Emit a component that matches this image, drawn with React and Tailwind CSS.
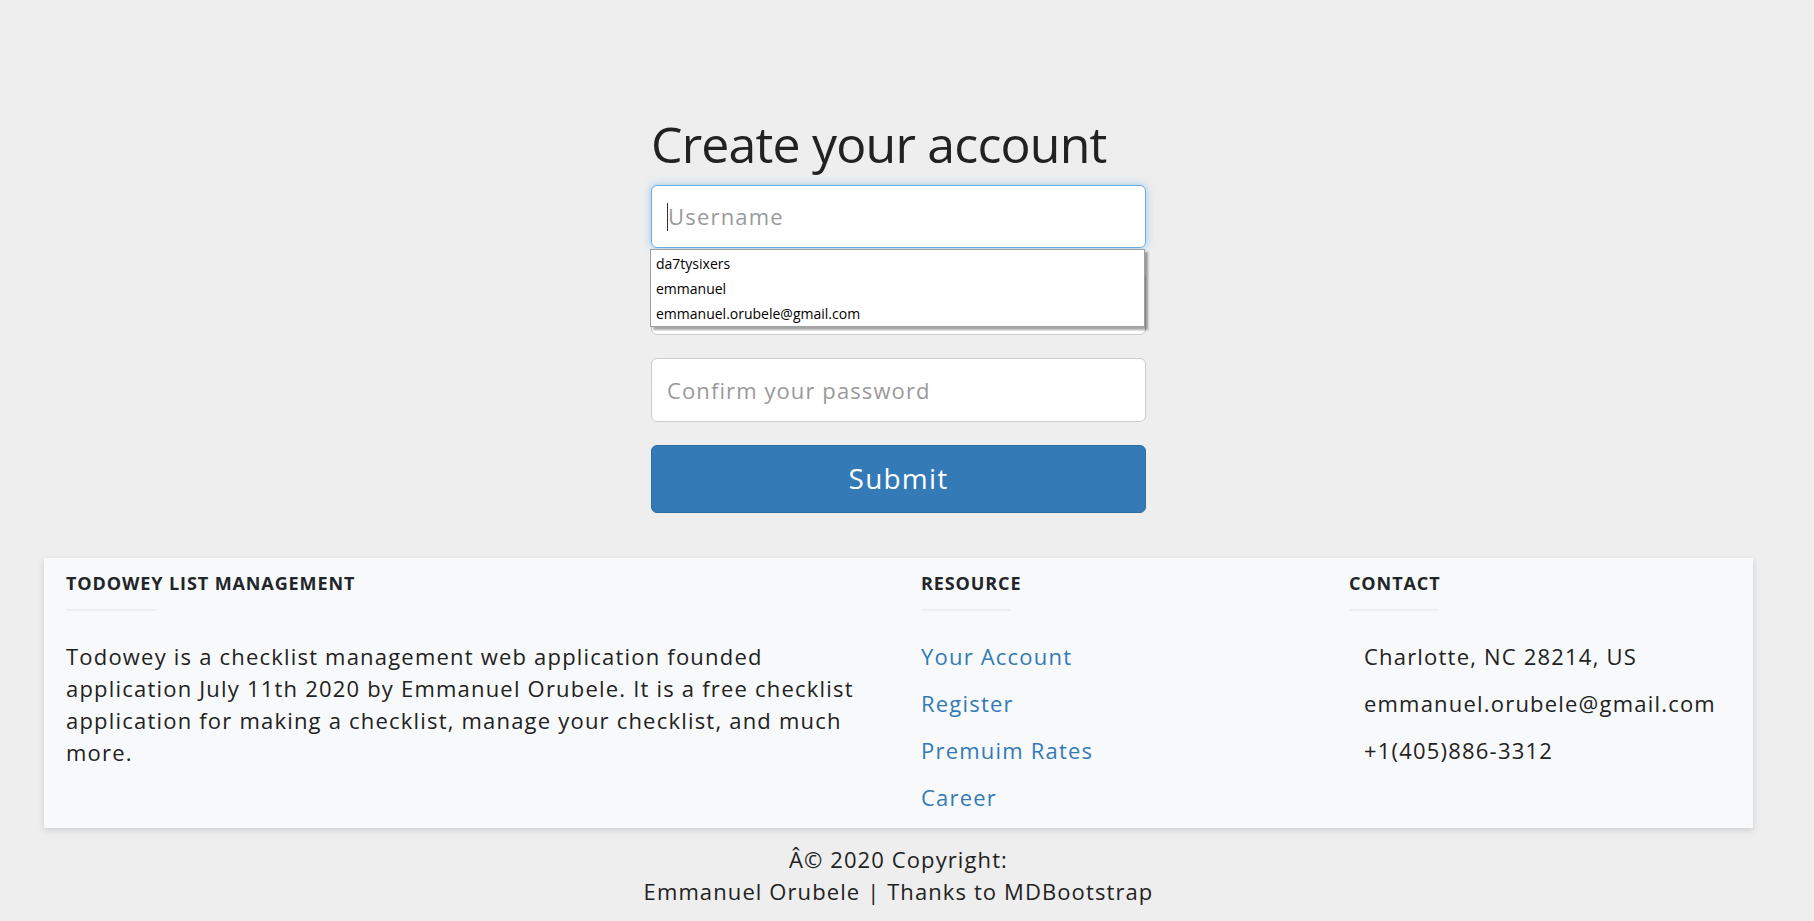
import React from 'react'

const FONT = { fontFamily: '"Open Sans", "DejaVu Sans", sans-serif' }

const RESOURCE_LINKS = ['Your Account', 'Register', 'Premuim Rates', 'Career']
const CONTACT = ['Charlotte, NC 28214, US', 'emmanuel.orubele@gmail.com', '+1(405)886-3312']
const SUGGESTIONS = ['da7tysixers', 'emmanuel', 'emmanuel.orubele@gmail.com']

function FooterHeading({ children }) {
  return (
    <div>
      <h6 className="text-[18px] font-bold uppercase text-[#212529] leading-none tracking-[0.9px]">{children}</h6>
      <div className="mt-[17px] h-[2px] w-[90px] bg-[#eceef1]" />
    </div>
  )
}

export default function App() {
  return (
    <div className="min-h-screen bg-[#eeeeee] text-[#212529]" style={FONT}>
      <div className="w-[1797px]">
        <div className="mx-auto w-[495px] pt-[114px]">
          <h1 className="text-[50px] leading-[60px] text-[#222] tracking-[-0.8px]">Create your account</h1>

          <div className="relative mt-[11px]">
            <div className="h-[63px] rounded-md border border-[#66afe9] bg-white shadow-[0_0_8px_rgba(102,175,233,0.6)] flex items-center pl-[15px]">
              <span className="w-px h-[28px] bg-[#333]" />
              <span className="text-[22px] tracking-[1.2px] text-[#9a9a9a]">Username</span>
            </div>

            <div className="mt-[24px] h-[63px] rounded-md border border-[#cccccc] bg-white" />

            <div className="absolute left-[-1px] top-[64px] w-[495px] border border-[#a0a0a0] bg-white pt-[1px] shadow-[3px_3px_2px_rgba(0,0,0,0.35)]">
              {SUGGESTIONS.map(s => (
                <div key={s} className="h-[25px] px-[5px] flex items-center text-[14px] text-black">{s}</div>
              ))}
            </div>

            <div className="mt-[23px] h-[64px] rounded-md border border-[#cccccc] bg-white flex items-center px-[15px]">
              <span className="text-[22px] tracking-[1.1px] text-[#9a9a9a]">Confirm your password</span>
            </div>

            <button className="mt-[23px] w-full h-[68px] rounded-md border border-[#2e6da4] bg-[#337ab7] text-white text-[28px] tracking-[1.2px] pb-[3px]">Submit</button>
          </div>
        </div>

        <footer className="mt-[45px] mx-[44px] bg-[#f8f9fa] shadow-[0_2px_6px_rgba(0,0,0,0.15)] grid grid-cols-[855px_428px_1fr] pt-[16px] h-[270px]">
          <div className="px-[22px]">
            <FooterHeading>Todowey List Management</FooterHeading>
            <p className="mt-[29px] text-[22px] leading-[32px] tracking-[1.2px] text-[#222]">
              Todowey is a checklist management web application founded application July 11th 2020 by Emmanuel Orubele. It is a free checklist application for making a checklist, manage your checklist, and much more.
            </p>
          </div>
          <div className="px-[22px]">
            <FooterHeading>Resource</FooterHeading>
            <ul className="mt-[29px] flex flex-col gap-[15px]">
              {RESOURCE_LINKS.map(l => (
                <li key={l}><a href="#" className="text-[22px] leading-[32px] tracking-[1.2px] text-[#337ab7]">{l}</a></li>
              ))}
            </ul>
          </div>
          <div className="px-[22px]">
            <FooterHeading>Contact</FooterHeading>
            <ul className="mt-[29px] pl-[15px] flex flex-col gap-[15px]">
              {CONTACT.map(c => (
                <li key={c} className="text-[22px] leading-[32px] tracking-[1.2px] text-[#222]">{c}</li>
              ))}
            </ul>
          </div>
        </footer>

        <div className="pt-[15px] text-center text-[22px] leading-[32px] tracking-[1.1px] text-[#222]">
          <div>Â© 2020 Copyright:</div>
          <div>Emmanuel Orubele | Thanks to MDBootstrap</div>
        </div>
      </div>
    </div>
  )
}
